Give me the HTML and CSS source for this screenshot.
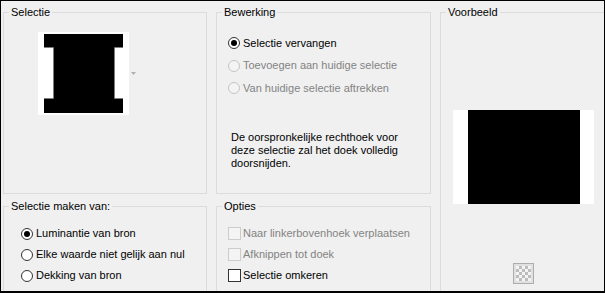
FILE: index.html
```html
<!DOCTYPE html>
<html lang="nl">
<head>
<meta charset="utf-8">
<title>Selectie</title>
<link rel="stylesheet" href="styles.css">
</head>
<body>
<div class="dialog">
  <div class="grid">
    <fieldset class="group g-sel">
      <legend>Selectie</legend>
      <div class="sel-preview">
        <svg width="91" height="83" viewBox="0 0 91 83">
          <rect width="91" height="83" fill="#fff"/>
          <path d="M6 2H85V15H77V67H85V81H6V67H15V15H6Z" fill="#000"/>
          <path d="M6 15.5H15.5V66.5H6M85 15.5H76.5V66.5H85" fill="none" stroke="#7c7c7c" stroke-width="1"/>
        </svg>
        <svg class="drop" width="5" height="3" viewBox="0 0 5 3"><path d="M0 0H5L2.5 3Z" fill="#b0b0b0"/></svg>
      </div>
    </fieldset>

    <fieldset class="group g-bew">
      <legend>Bewerking</legend>
      <div class="opts opts-bew">
        <div class="row row-tall"><span class="radio on"></span><span>Selectie vervangen</span></div>
        <div class="row row-tall disabled"><span class="radio"></span><span>Toevoegen aan huidige selectie</span></div>
        <div class="row row-tall disabled"><span class="radio"></span><span>Van huidige selectie aftrekken</span></div>
      </div>
      <p class="desc">De oorspronkelijke rechthoek voor deze selectie zal het doek volledig doorsnijden.</p>
    </fieldset>

    <fieldset class="group g-voor">
      <legend>Voorbeeld</legend>
      <div class="voor-body">
        <svg width="141" height="94" viewBox="0 0 141 94">
          <rect width="141" height="94" fill="#fff"/>
          <rect x="15" width="112" height="94" fill="#000"/>
        </svg>
        <div class="checker-btn"><span class="checker"></span></div>
      </div>
    </fieldset>

    <fieldset class="group g-maken">
      <legend>Selectie maken van:</legend>
      <div class="opts opts-maken">
        <div class="row"><span class="radio on"></span><span>Luminantie van bron</span></div>
        <div class="row"><span class="radio"></span><span>Elke waarde niet gelijk aan nul</span></div>
        <div class="row"><span class="radio"></span><span>Dekking van bron</span></div>
      </div>
    </fieldset>

    <fieldset class="group g-opt">
      <legend>Opties</legend>
      <div class="opts opts-opt">
        <div class="row disabled"><span class="check"></span><span>Naar linkerbovenhoek verplaatsen</span></div>
        <div class="row disabled"><span class="check"></span><span>Afknippen tot doek</span></div>
        <div class="row"><span class="check"></span><span>Selectie omkeren</span></div>
      </div>
    </fieldset>
  </div>
</div>
</body>
</html>
```
FILE: styles.css
```css
html, body {
  margin: 0;
  padding: 0;
  background: #f0f0f0;
}

.dialog {
  width: 605px;
  height: 293px;
  box-sizing: border-box;
  border: 1px solid #000;
  border-bottom-width: 2px;
  background: #f0f0f0;
  overflow: hidden;
  font-family: "Liberation Sans", Arial, sans-serif;
  font-size: 11px;
  line-height: 13px;
  color: #000;
}

.grid {
  display: grid;
  grid-template-columns: 204px 215px 167px;
  grid-template-rows: 188px 120px;
  column-gap: 9px;
  row-gap: 6px;
  padding: 5px 0 0 2px;
}

.group {
  margin: 0;
  padding: 0;
  min-width: 0;
  border: 1px solid #dcdcdc;
}

.group legend {
  margin-left: 5px;
  padding: 0 2px;
  line-height: 13px;
}

.g-sel { grid-column: 1; grid-row: 1; }
.g-bew { grid-column: 2; grid-row: 1; }
.g-voor { grid-column: 3; grid-row: 1 / span 2; }
.g-maken { grid-column: 1; grid-row: 2; }
.g-opt { grid-column: 2; grid-row: 2; }

.sel-preview {
  display: flex;
  align-items: center;
  gap: 2px;
  margin: 13px 0 0 34px;
}

.sel-preview svg { display: block; }

.opts { display: flex; flex-direction: column; }

.row {
  display: flex;
  align-items: center;
  gap: 3px;
  height: 21px;
}

.row-tall { height: 22.5px; }

.row.disabled { color: #838383; }

.opts-bew { margin-top: 13px; padding-left: 11px; }
.opts-maken { margin-top: 10px; padding-left: 17px; }
.opts-opt { margin-top: 10px; padding-left: 11px; }
.opts-opt .row { gap: 2px; }

.radio {
  flex: none;
  width: 12px;
  height: 12px;
  box-sizing: border-box;
  border: 1px solid #333;
  border-radius: 50%;
  background: #fff;
  display: flex;
  align-items: center;
  justify-content: center;
}

.radio.on::after {
  content: "";
  width: 6px;
  height: 6px;
  border-radius: 50%;
  background: #000;
}

.disabled .radio {
  border-color: #c4c4c4;
  background: #f4f4f4;
}

.check {
  flex: none;
  width: 13px;
  height: 13px;
  box-sizing: border-box;
  border: 1px solid #333;
  background: #fff;
}

.disabled .check {
  border-color: #cccccc;
  background: #f4f4f4;
}

.desc {
  margin: 31px 0 0 14px;
  width: 180px;
  line-height: 13px;
}

.voor-body {
  display: flex;
  flex-direction: column;
  align-items: center;
  padding-top: 91px;
}

.voor-body svg { display: block; }

.checker-btn {
  margin-top: 59px;
  width: 21px;
  height: 21px;
  box-sizing: border-box;
  border: 1px solid #adadad;
  background: #e1e1e1;
  display: flex;
  align-items: center;
  justify-content: center;
}

.checker {
  width: 15px;
  height: 15px;
  background: repeating-conic-gradient(#bdbdbd 0 25%, #f4f4f4 0 50%) 0 0 / 6px 6px;
}
```
